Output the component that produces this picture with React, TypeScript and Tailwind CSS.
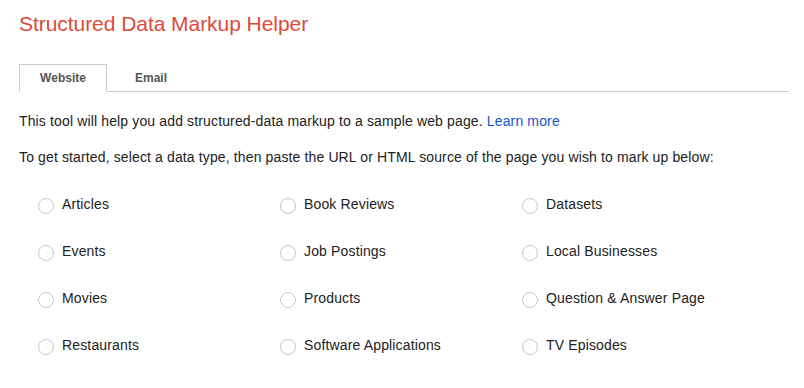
import React from "react";

const items = [
  "Articles", "Book Reviews", "Datasets",
  "Events", "Job Postings", "Local Businesses",
  "Movies", "Products", "Question & Answer Page",
  "Restaurants", "Software Applications", "TV Episodes",
];

export default function App() {
  return (
    <div className="w-[804px] h-[388px] bg-white pl-[19px] pr-[15px] pt-[12px] text-[#222]" style={{ fontFamily: '"Liberation Sans", Arial, sans-serif' }}>
      <h1 className="text-[21px] leading-[24px] text-[#dd4b39] font-normal tracking-[-0.05px]">Structured Data Markup Helper</h1>
      <div className="mt-[28px] flex border-b border-[#cccccc] h-[28px]">
        <div className="w-[88px] h-[28px] border border-[#cccccc] border-b-white bg-white -mb-px flex items-center justify-center text-[12px] font-bold text-[#555]">
          Website
        </div>
        <div className="w-[88px] h-[28px] flex items-center justify-center text-[12px] font-bold text-[#555]">
          Email
        </div>
      </div>
      <p className="mt-[21px] text-[14px] leading-[17px] tracking-[0.14px]">
        This tool will help you add structured-data markup to a sample web page.{" "}
        <span className="text-[#1155cc]">Learn more</span>
      </p>
      <p className="mt-[19px] text-[14px] leading-[17px] tracking-[0.13px]">
        To get started, select a data type, then paste the URL or HTML source of the page you wish to mark up below:
      </p>
      <div className="mt-[15px] grid grid-cols-[242px_242px_242px] pl-[19px]">
        {items.map((t) => (
          <div key={t} className="h-[47px] flex items-center">
            <span className="w-[16px] h-[16px] shrink-0 rounded-full border border-[#c8c8c8] bg-white mt-[2px]" />
            <span className="ml-[8px] text-[14px] leading-[17px] tracking-[0.15px]">{t}</span>
          </div>
        ))}
      </div>
    </div>
  );
}
